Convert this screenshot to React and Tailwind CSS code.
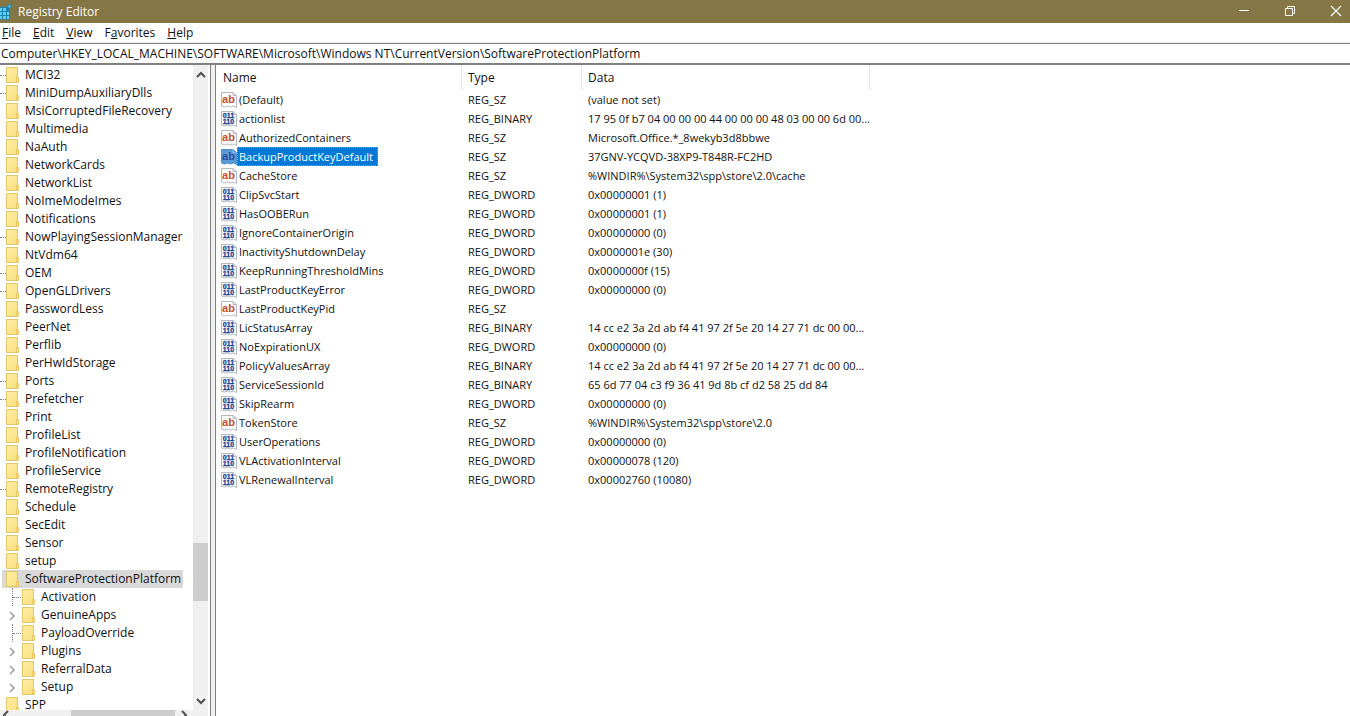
import React from "react";

const treeRows = [
  ["MCI32", true],
  ["MiniDumpAuxiliaryDlls", true],
  ["MsiCorruptedFileRecovery"],
  ["Multimedia"],
  ["NaAuth"],
  ["NetworkCards"],
  ["NetworkList"],
  ["NoImeModeImes"],
  ["Notifications"],
  ["NowPlayingSessionManager", true],
  ["NtVdm64"],
  ["OEM", true],
  ["OpenGLDrivers", true],
  ["PasswordLess"],
  ["PeerNet"],
  ["Perflib"],
  ["PerHwIdStorage"],
  ["Ports", true],
  ["Prefetcher", true],
  ["Print"],
  ["ProfileList"],
  ["ProfileNotification"],
  ["ProfileService"],
  ["RemoteRegistry", true],
  ["Schedule"],
  ["SecEdit"],
  ["Sensor"],
  ["setup"],
];

const childRows = [
  ["Activation", false],
  ["GenuineApps", true],
  ["PayloadOverride", false],
  ["Plugins", true],
  ["ReferralData", true],
  ["Setup", true],
];

const values = [
  ["(Default)", "REG_SZ", "(value not set)"],
  ["actionlist", "REG_BINARY", "17 95 0f b7 04 00 00 00 44 00 00 00 48 03 00 00 6d 00..."],
  ["AuthorizedContainers", "REG_SZ", "Microsoft.Office.*_8wekyb3d8bbwe"],
  ["BackupProductKeyDefault", "REG_SZ", "37GNV-YCQVD-38XP9-T848R-FC2HD"],
  ["CacheStore", "REG_SZ", "%WINDIR%\\System32\\spp\\store\\2.0\\cache"],
  ["ClipSvcStart", "REG_DWORD", "0x00000001 (1)"],
  ["HasOOBERun", "REG_DWORD", "0x00000001 (1)"],
  ["IgnoreContainerOrigin", "REG_DWORD", "0x00000000 (0)"],
  ["InactivityShutdownDelay", "REG_DWORD", "0x0000001e (30)"],
  ["KeepRunningThresholdMins", "REG_DWORD", "0x0000000f (15)"],
  ["LastProductKeyError", "REG_DWORD", "0x00000000 (0)"],
  ["LastProductKeyPid", "REG_SZ", ""],
  ["LicStatusArray", "REG_BINARY", "14 cc e2 3a 2d ab f4 41 97 2f 5e 20 14 27 71 dc 00 00..."],
  ["NoExpirationUX", "REG_DWORD", "0x00000000 (0)"],
  ["PolicyValuesArray", "REG_BINARY", "14 cc e2 3a 2d ab f4 41 97 2f 5e 20 14 27 71 dc 00 00..."],
  ["ServiceSessionId", "REG_BINARY", "65 6d 77 04 c3 f9 36 41 9d 8b cf d2 58 25 dd 84"],
  ["SkipRearm", "REG_DWORD", "0x00000000 (0)"],
  ["TokenStore", "REG_SZ", "%WINDIR%\\System32\\spp\\store\\2.0"],
  ["UserOperations", "REG_DWORD", "0x00000000 (0)"],
  ["VLActivationInterval", "REG_DWORD", "0x00000078 (120)"],
  ["VLRenewalInterval", "REG_DWORD", "0x00002760 (10080)"],
];

const menus = [
  ["", "F", "ile"],
  ["", "E", "dit"],
  ["", "V", "iew"],
  ["F", "a", "vorites"],
  ["", "H", "elp"],
];

function FolderIcon() {
  return (
    <svg className="block h-4 w-[13px] shrink-0" viewBox="0 0 13 16" aria-hidden="true">
      <defs>
        <linearGradient id="folder" x1="0" y1="0" x2="1" y2="1">
          <stop offset="0" stopColor="#fdeea6" />
          <stop offset="1" stopColor="#fadf7e" />
        </linearGradient>
      </defs>
      <path d="M.5.5h11v15H.5z" fill="url(#folder)" stroke="#e3c668" />
      <path d="M10.500 10.500h2v5h-2z" fill="#fae58e" stroke="#dfbe5a" strokeWidth=".8" />
    </svg>
  );
}

function ValueIcon({ text, selected }) {
  return (
    <svg className="block h-4 w-4 shrink-0" viewBox="0 0 16 16" aria-hidden="true">
      <path
        d="M.5.5h11.500l3.500 3v12l-3-1.500-3 1-3-1-3 1-3-1z"
        fill={selected ? "#5a9bd6" : "#fdfdfe"}
        stroke={selected ? "#4d8fcb" : "#b4b8c0"}
      />
      <path d="M12 .5v3h3.500" fill="none" stroke={selected ? "#8dbce6" : "#b4b8c0"} />
      {text ? (
        <text x="7.500" y="11" textAnchor="middle" fontFamily="Liberation Sans, sans-serif" fontWeight="700" fontSize="11" fill={selected ? "#2b4f9c" : "#c4512c"}>
          ab
        </text>
      ) : (
        <g fontFamily="Liberation Sans, sans-serif" fontWeight="700" fontSize="7" fill="#1f4591" stroke="#1f4591" strokeWidth=".3" textAnchor="middle">
          <text x="7.500" y="7">011</text>
          <text x="7.500" y="13">110</text>
        </g>
      )}
    </svg>
  );
}

function Arrow({ d, className }) {
  return (
    <svg className={className} viewBox="0 0 10 10" fill="none" stroke="#505050" strokeWidth="2" aria-hidden="true">
      <path d={d} />
    </svg>
  );
}

function TitleBar() {
  return (
    <header className="flex h-[23px] shrink-0 items-center bg-[#857645] text-white">
      <svg className="block h-4 w-3 shrink-0" viewBox="0 0 12 16" aria-hidden="true">
        <path d="M0 3h9.500v12.500H0z" fill="#1585b8" />
        <path d="M0 4h2v3H0zM3 4h3v3H3zM0 8h2v3H0zM3 8h3v3H3zM7 8h2v3H7zM0 12h2v3H0zM3 12h3v3H3zM7 12h2v3H7z" fill="#65cdf2" />
        <path d="M9.500 0l2.500 2-2.500 3L7 2.500z" fill="#48b6e2" stroke="#1a749e" strokeWidth=".6" />
      </svg>
      <h1 className="flex-1 pl-1.5">Registry Editor</h1>
      <div className="flex h-full items-center gap-[34px] pr-2 pb-0.5">
        <button aria-label="Minimize">
          <svg className="block size-3" viewBox="0 0 12 12" stroke="#fff" aria-hidden="true"><path d="M1 5.500h10" /></svg>
        </button>
        <button aria-label="Restore">
          <svg className="block size-3" viewBox="0 0 12 12" stroke="#fff" fill="none" aria-hidden="true"><path d="M1.500 3.500h7v7h-7zM3.500 3.500v-2h7v7h-2" /></svg>
        </button>
        <button aria-label="Close">
          <svg className="block size-3" viewBox="0 0 12 12" stroke="#fff" strokeWidth="1.200" aria-hidden="true"><path d="M1 1l10 10M11 1L1 11" /></svg>
        </button>
      </div>
    </header>
  );
}

function Tree() {
  return (
    <ul className="min-h-0 flex-1 overflow-hidden pt-px">
      {treeRows.map(([name, dots]) => (
        <li key={name} className="flex h-[18px] items-center">
          <span className={dots ? "w-1.5 border-t border-dotted border-[#808080]" : "w-1.5"} />
          <button className="flex items-center gap-1.5">
            <FolderIcon />
            {name}
          </button>
        </li>
      ))}
      <li>
        <button className="ml-0.5 flex h-[18px] items-center gap-1.5 bg-[#d9d9d9] pr-0.5 pl-1">
          <FolderIcon />
          SoftwareProtectionPlatform
        </button>
        <ul>
          {childRows.map(([name, expandable]) => (
            <li key={name} className="flex h-[18px] items-center">
              {expandable ? (
                <button aria-label={"Expand " + name} className="flex w-[22px] justify-start pt-0.5 pl-2">
                  <svg className="h-2.5 w-2" viewBox="0 0 8 10" fill="none" stroke="#a0a0a0" strokeWidth="1.600" aria-hidden="true"><path d="M2 1l4 4-4 4" /></svg>
                </button>
              ) : (
                <span className="flex h-full w-[22px] items-center pl-3">
                  <span className="h-full border-l border-dotted border-[#808080]" />
                  <span className="w-2 border-t border-dotted border-[#808080]" />
                </span>
              )}
              <button className="flex items-center gap-1.5">
                <FolderIcon />
                {name}
              </button>
            </li>
          ))}
        </ul>
      </li>
      <li className="flex h-[18px] items-center pl-1.5">
        <button className="flex items-center gap-1.5">
          <FolderIcon />
          SPP
        </button>
      </li>
    </ul>
  );
}

export default function App() {
  return (
    <div className="flex h-screen w-full flex-col overflow-hidden bg-white font-['Open_Sans','Noto_Sans',sans-serif] text-[12px] leading-[18px] whitespace-nowrap text-[#111]">
      <TitleBar />
      <nav className="flex h-5 shrink-0 items-center gap-3 border-b border-[#f0f0f0] pl-0.5">
        {menus.map(([a, b, c]) => (
          <button key={a + b + c}>
            {a}
            <span className="underline">{b}</span>
            {c}
          </button>
        ))}
      </nav>
      <input
        aria-label="Address"
        className="h-[22px] w-full shrink-0 border-t border-b-2 border-[#808080] bg-white pl-px outline-none"
        defaultValue="Computer\HKEY_LOCAL_MACHINE\SOFTWARE\Microsoft\Windows NT\CurrentVersion\SoftwareProtectionPlatform"
      />
      <main className="flex min-h-0 flex-1">
        <aside className="flex w-[211px] shrink-0 border-r border-[#808080]">
          <div className="flex min-w-0 flex-1 flex-col">
            <Tree />
            <div className="flex h-1.5 shrink-0 items-start overflow-hidden bg-[#f0f0f0]">
              <button aria-label="Scroll left" className="w-4 pl-0.5">
                <Arrow className="size-2.5" d="M6 1L2 5l4 4" />
              </button>
              <span className="flex-[55]" />
              <span className="h-full flex-[104] bg-[#cdcdcd]" />
              <button aria-label="Scroll right" className="w-[18px] pl-1">
                <Arrow className="size-2.5" d="M3 1l4 4-4 4" />
              </button>
            </div>
          </div>
          <div className="mr-0.5 flex w-[15px] shrink-0 flex-col bg-[#f0f0f0]">
            <button aria-label="Scroll up" className="flex h-5 items-center justify-center">
              <Arrow className="size-2.5" d="M1 7l4-4 4 4" />
            </button>
            <span className="flex-[460]" />
            <span className="flex-[58] bg-[#cdcdcd]" />
            <span className="flex-[91]" />
            <button aria-label="Scroll down" className="mb-1.5 flex h-[18px] items-center justify-center">
              <Arrow className="size-2.5" d="M1 3l4 4 4-4" />
            </button>
          </div>
        </aside>
        <div className="w-1 shrink-0 bg-[#f0f0f0]" />
        <section className="min-w-0 flex-1 overflow-hidden border-l border-[#808080]">
          <table className="w-[654px] table-fixed border-separate border-spacing-0 text-left text-[11px]">
            <colgroup>
              <col className="w-[246px]" />
              <col className="w-[120px]" />
              <col className="w-[288px]" />
            </colgroup>
            <thead>
              <tr className="h-[25px] text-[12px]">
                {["Name", "Type", "Data"].map((h) => (
                  <th key={h} className="border-r border-[#e5e5e5] p-0 pl-1.5 font-normal first:pl-[7px]">{h}</th>
                ))}
              </tr>
            </thead>
            <tbody>
              {values.map(([name, type, data]) => {
                const selected = name === "BackupProductKeyDefault";
                return (
                  <tr key={name} className="h-[19px]">
                    <td className="p-0 pl-[5px]">
                      <button className="flex h-[19px] items-center">
                        <ValueIcon text={type === "REG_SZ"} selected={selected} />
                        <span className={selected ? "border border-dotted border-[#e08a3c] bg-[#0078d7] pr-1 pl-px leading-[17px] text-white" : "pl-0.5"}>
                          {name}
                        </span>
                      </button>
                    </td>
                    <td className="p-0 pl-1.5">{type}</td>
                    <td className="p-0 pl-1.5">{data}</td>
                  </tr>
                );
              })}
            </tbody>
          </table>
        </section>
      </main>
    </div>
  );
}
